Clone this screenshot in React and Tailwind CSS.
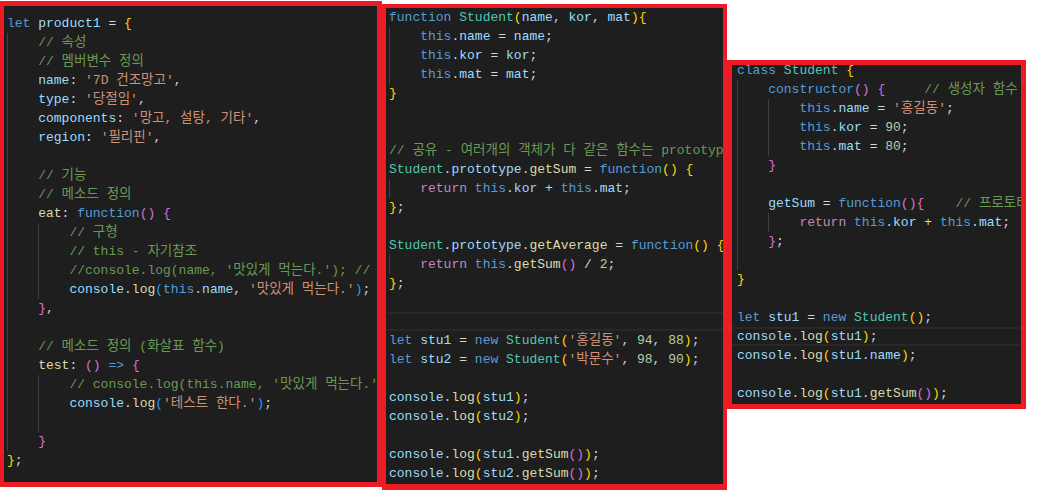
import clsx from 'clsx';

// token colours (VS Code Dark+)
const K = 'text-[#569cd6]';
const V = 'text-[#9cdcfe]';
const S = 'text-[#ce9178]';
const C = 'text-[#6a9955]';
const F = 'text-[#dcdcaa]';
const T = 'text-[#4ec9b0]';
const N = 'text-[#b5cea8]';
const R = 'text-[#c586c0]';
const P = 'text-[#d4d4d4]';
const B1 = 'text-[#ffd700]';
const B2 = 'text-[#da70d6]';
const B3 = 'text-[#179fff]';

const HANGUL = /([\uac00-\ud7a3\u3131-\u318e]+)/;

const log = (args, b = B1) => [['console', V], ['.', P], ['log', F], ['(', b], ...args, [')', b], [';', P]];

const PRODUCT = [
  [0, [['let', K], [' ', P], ['product1', V], [' = ', P], ['{', B1]]],
  [1, [['// 속성', C]]],
  [1, [['// 멤버변수 정의', C]]],
  [1, [['name', V], [': ', P], ["'7D 건조망고'", S], [',', P]]],
  [1, [['type', V], [': ', P], ["'당절임'", S], [',', P]]],
  [1, [['components', V], [': ', P], ["'망고, 설탕, 기타'", S], [',', P]]],
  [1, [['region', V], [': ', P], ["'필리핀'", S], [',', P]]],
  [1, []],
  [1, [['// 기능', C]]],
  [1, [['// 메소드 정의', C]]],
  [1, [['eat', F], [': ', P], ['function', K], ['()', B2], [' ', P], ['{', B2]]],
  [2, [['// 구형', C]]],
  [2, [['// this - 자기참조', C]]],
  [2, [["//console.log(name, '맛있게 먹는다.'); // this 없이는 접근 불가", C]]],
  [2, log([['this', K], ['.', P], ['name', V], [', ', P], ["'맛있게 먹는다.'", S]], B3)],
  [1, [['}', B2], [',', P]]],
  [1, []],
  [1, [['// 메소드 정의 (화살표 함수)', C]]],
  [1, [['test', F], [': ', P], ['()', B2], [' ', P], ['=>', K], [' ', P], ['{', B2]]],
  [2, [["// console.log(this.name, '맛있게 먹는다.');", C]]],
  [2, log([["'테스트 한다.'", S]], B3)],
  [2, []],
  [1, [['}', B2]]],
  [0, [['}', B1], [';', P]]],
];

const PROTO = [
  [0, [['function', K], [' ', P], ['Student', T], ['(', B1], ['name', V], [', ', P], ['kor', V], [', ', P], ['mat', V], [')', B1], ['{', B1]]],
  [1, [['this', K], ['.', P], ['name', V], [' = ', P], ['name', V], [';', P]]],
  [1, [['this', K], ['.', P], ['kor', V], [' = ', P], ['kor', V], [';', P]]],
  [1, [['this', K], ['.', P], ['mat', V], [' = ', P], ['mat', V], [';', P]]],
  [0, [['}', B1]]],
  [0, []],
  [0, []],
  [0, [['// 공유 - 여러개의 객체가 다 같은 함수는 prototype에 정의', C]]],
  [0, [['Student', T], ['.', P], ['prototype', V], ['.', P], ['getSum', F], [' = ', P], ['function', K], ['()', B1], [' ', P], ['{', B1]]],
  [1, [['return', R], [' ', P], ['this', K], ['.', P], ['kor', V], [' + ', P], ['this', K], ['.', P], ['mat', V], [';', P]]],
  [0, [['}', B1], [';', P]]],
  [0, []],
  [0, [['Student', T], ['.', P], ['prototype', V], ['.', P], ['getAverage', F], [' = ', P], ['function', K], ['()', B1], [' ', P], ['{', B1]]],
  [1, [['return', R], [' ', P], ['this', K], ['.', P], ['getSum', F], ['()', B2], [' / ', P], ['2', N], [';', P]]],
  [0, [['}', B1], [';', P]]],
  [0, []],
  [0, [], true],
  [0, [['let', K], [' ', P], ['stu1', V], [' = ', P], ['new', K], [' ', P], ['Student', T], ['(', B1], ["'홍길동'", S], [', ', P], ['94', N], [', ', P], ['88', N], [')', B1], [';', P]]],
  [0, [['let', K], [' ', P], ['stu2', V], [' = ', P], ['new', K], [' ', P], ['Student', T], ['(', B1], ["'박문수'", S], [', ', P], ['98', N], [', ', P], ['90', N], [')', B1], [';', P]]],
  [0, []],
  [0, log([['stu1', V]])],
  [0, log([['stu2', V]])],
  [0, []],
  [0, log([['stu1', V], ['.', P], ['getSum', F], ['()', B2]])],
  [0, log([['stu2', V], ['.', P], ['getSum', F], ['()', B2]])],
];

const CLASS = [
  [0, [['class', K], [' ', P], ['Student', T], [' ', P], ['{', B1]]],
  [1, [['constructor', K], ['()', B2], [' ', P], ['{', B2], ['     ', P], ['// 생성자 함수', C]]],
  [2, [['this', K], ['.', P], ['name', V], [' = ', P], ["'홍길동'", S], [';', P]]],
  [2, [['this', K], ['.', P], ['kor', V], [' = ', P], ['90', N], [';', P]]],
  [2, [['this', K], ['.', P], ['mat', V], [' = ', P], ['80', N], [';', P]]],
  [1, [['}', B2]]],
  [1, []],
  [1, [['getSum', V], [' = ', P], ['function', K], ['()', B2], ['{', B2], ['    ', P], ['// 프로토타입 함수', C]]],
  [2, [['return', R], [' ', P], ['this', K], ['.', P], ['kor', V], [' + ', P], ['this', K], ['.', P], ['mat', V], [';', P]]],
  [1, [['}', B2], [';', P]]],
  [1, []],
  [0, [['}', B1]]],
  [0, []],
  [0, [['let', K], [' ', P], ['stu1', V], [' = ', P], ['new', K], [' ', P], ['Student', T], ['()', B1], [';', P]]],
  [0, log([['stu1', V]]), true],
  [0, log([['stu1', V], ['.', P], ['name', V]])],
  [0, []],
  [0, log([['stu1', V], ['.', P], ['getSum', F], ['()', B2]])],
];

// Korean glyphs in the editor font run a bit wider than the latin cells
function Text({ text }) {
  return text.split(HANGUL).map((part, i) =>
    i % 2 ? <span key={i} className="text-[13.5px]">{part}</span> : part
  );
}

function Line({ indent, tokens, current, pad }) {
  return (
    <div
      className={clsx(
        'h-[19px] whitespace-pre leading-[19px]',
        pad,
        current && 'shadow-[inset_0_2px_0_#282828,inset_0_-2px_0_#282828]'
      )}
    >
      {Array.from({ length: indent }).map((_, i) => (
        <span key={i} className="inline-block h-[19px] w-[4ch] border-l border-[#404040] align-top" />
      ))}
      {tokens.map(([t, c], i) => (
        <span key={i} className={c}><Text text={t} /></span>
      ))}
    </div>
  );
}

function Code({ lines, pad, className }) {
  return (
    <div className={className}>
      {lines.map(([indent, tokens, current], i) => (
        <Line key={i} indent={indent} tokens={tokens} current={current} pad={pad} />
      ))}
    </div>
  );
}

export default function App() {
  return (
    <div className="flex h-[490px] w-[1040px] items-start overflow-hidden bg-white font-['Liberation_Mono','Noto_Sans_CJK_KR',monospace] text-[13px] text-[#d4d4d4]">
      <div className="mt-[1px] h-[486px] w-[382px] shrink-0 overflow-hidden border-[5px] border-l-[4px] border-[#ed1c24] bg-[#1e1e1e]">
        <Code lines={PRODUCT} pad="pl-[3px]" className="pt-[8px]" />
      </div>
      <div className="mt-[4px] h-[486px] w-[345px] shrink-0 overflow-hidden border-[4px] border-b-[6px] border-[#ed1c24] bg-[#1e1e1e]">
        <Code lines={PROTO} pad="pl-[3px]" />
      </div>
      <div className="mt-[60px] h-[349px] w-[299px] shrink-0 overflow-hidden border-[5px] border-[#ed1c24] bg-[#1e1e1e]">
        <Code lines={CLASS} pad="pl-[5px]" className="-mt-[4px]" />
      </div>
    </div>
  );
}
